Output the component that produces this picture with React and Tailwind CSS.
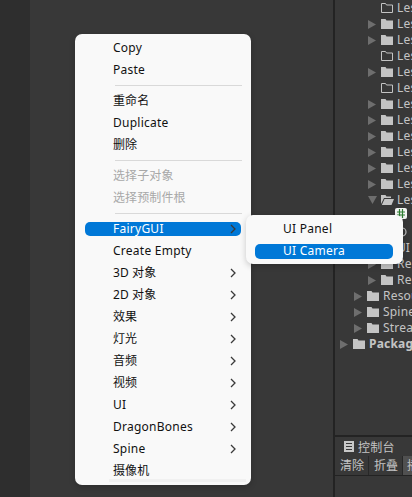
const TF = { fontFamily: '"Noto Sans", "Noto Sans CJK SC", sans-serif' };

function Chevron() {
  return (
    <svg width="6" height="10" viewBox="0 0 6 10" fill="none" className="shrink-0">
      <path d="M1 1L5 5L1 9" stroke="#3a3a3a" strokeWidth="1.3" />
    </svg>
  );
}

function Sep() {
  return (
    <div className="h-[9px] flex items-center pl-[40px] pr-[9px]">
      <div className="h-px w-full bg-[#d9d9d9]" />
    </div>
  );
}

function Item({ label, arrow, active, disabled }) {
  const color = active ? "text-white" : disabled ? "text-[#a8a8a8]" : "text-[#111111]";
  const spacing = /[^\x00-\x7f]/.test(label) ? "tracking-[0.1px]" : "tracking-[0.25px]";
  return (
    <div className="h-[22px] flex items-center relative px-[10px]">
      {active && <div className="absolute left-[10px] right-[10px] top-[4px] h-[14px] rounded-[5px] bg-[#0078d7]" />}
      <span className={`relative ml-[28px] flex-1 text-[12px] leading-[22px] whitespace-nowrap ${spacing} ${color}`}>{label}</span>
      {arrow && <span className="relative flex mr-[5px]"><Chevron /></span>}
    </div>
  );
}

function Arrow({ open }) {
  return open ? (
    <svg width="9" height="8" viewBox="0 0 9 8"><path d="M0 0H9L4.5 8Z" fill="#6e6e6e" /></svg>
  ) : (
    <svg width="8" height="9" viewBox="0 0 8 9"><path d="M0 0L8 4.5L0 9Z" fill="#6e6e6e" /></svg>
  );
}

function Folder({ kind }) {
  if (kind === "empty")
    return (
      <svg width="12" height="10" viewBox="0 0 12 10" fill="none">
        <path d="M.5.5H4.5L5.5 2H11.5V9.5H.5Z" stroke="#c4c4c4" />
      </svg>
    );
  if (kind === "open")
    return (
      <svg width="13" height="10" viewBox="0 0 13 10">
        <path d="M0 0H4.5L5.5 1.5H10V3H3L0 9Z" fill="#c4c4c4" />
        <path d="M3.5 4H13L10.5 10H.8Z" fill="#c4c4c4" />
      </svg>
    );
  return (
    <svg width="12" height="10" viewBox="0 0 12 10">
      <path d="M0 0H4.5L5.5 1.5H12V10H0Z" fill="#c4c4c4" />
    </svg>
  );
}

function Row({ indent, arrow, kind = "full", label, bold }) {
  return (
    <div className="h-4 flex items-center whitespace-nowrap" style={{ paddingLeft: indent }}>
      <span className="w-[13px] shrink-0 flex items-center">{arrow && <Arrow open={kind === "open"} />}</span>
      <span className="w-4 shrink-0 flex items-center"><Folder kind={kind} /></span>
      <span className={`text-[12px] leading-4 text-[#c4c4c4] tracking-[0.2px] ${bold ? "font-bold" : ""}`}>{label}</span>
    </div>
  );
}

const rows = [
  { arrow: false, kind: "empty", label: "Lesson01" },
  { arrow: true, label: "Lesson02" },
  { arrow: true, label: "Lesson03" },
  { arrow: false, kind: "empty", label: "Lesson04" },
  { arrow: true, label: "Lesson05" },
  { arrow: false, kind: "empty", label: "Lesson06" },
  { arrow: true, label: "Lesson07" },
  { arrow: true, label: "Lesson08" },
  { arrow: true, label: "Lesson09" },
  { arrow: true, label: "Lesson10" },
  { arrow: true, label: "Lesson11" },
  { arrow: true, label: "Lesson12" },
  { arrow: true, kind: "open", label: "Lesson13" },
];

export default function App() {
  return (
    <div className="relative w-[412px] h-[497px] overflow-hidden flex bg-[#383838]" style={TF}>
      <div className="w-[30px] shrink-0 bg-[#2e2e2e]" />
      <div className="w-[303px] shrink-0" />
      <div className="w-[2px] shrink-0 bg-[#232323]" />
      <div className="flex-1 min-w-0 flex flex-col overflow-hidden">
        <div className="h-[435px] shrink-0 overflow-hidden">
          {rows.map((r) => (
            <Row key={r.label} indent={33} {...r} />
          ))}
          <div className="h-4" />
          <div className="h-4 flex items-center pl-[62px]">
            <svg width="10" height="10" viewBox="0 0 10 10" fill="none">
              <circle cx="5" cy="5" r="4" stroke="#c4c4c4" strokeWidth="1.2" />
            </svg>
          </div>
          <div className="h-4 flex items-center pl-[62px] text-[12px] text-[#c4c4c4] whitespace-nowrap">UI</div>
          <Row indent={33} arrow label="Res" />
          <Row indent={33} arrow label="Res" />
          <Row indent={19} arrow label="Resources" />
          <Row indent={19} arrow label="Spine" />
          <Row indent={19} arrow label="StreamingAssets" />
          <Row indent={5} arrow label="Packages" bold />
        </div>
        <div className="h-[2px] shrink-0 bg-[#232323]" />
        <div className="h-[19px] shrink-0 flex items-center pl-[9px] gap-[4px]">
          <svg width="10" height="11" viewBox="0 0 10 11">
            <path d="M0 0H10V11H0Z" fill="#c8c8c8" />
            <path d="M2 2.5H8M2 5.5H8M2 8.5H8" stroke="#383838" strokeWidth="1" />
          </svg>
          <span className="text-[12px] leading-[19px] pt-[2px] text-[#c4c4c4] tracking-[0.2px] whitespace-nowrap">控制台</span>
        </div>
        <div className="h-[20px] shrink-0 flex border-b border-[#232323] text-[12px] text-[#c4c4c4] whitespace-nowrap">
          <div className="w-[34px] shrink-0 pl-[5px] leading-[19px] border-r border-[#282828]">清除</div>
          <div className="w-[34px] shrink-0 pl-[5px] leading-[19px] border-r border-[#282828]">折叠</div>
          <div className="flex-1 pl-[4px] leading-[19px] bg-[#505050]">播放</div>
        </div>
        <div className="flex-1" />
      </div>

      <div className="absolute left-[75px] top-[34px] w-[176px] h-[451px] rounded-[7px] bg-[#f9f9f9] pt-[3px] shadow-[0_2px_6px_rgba(0,0,0,0.2)]">
        <Item label="Copy" />
        <Item label="Paste" />
        <Sep />
        <Item label="重命名" />
        <Item label="Duplicate" />
        <Item label="删除" />
        <Sep />
        <Item label="选择子对象" disabled />
        <Item label="选择预制件根" disabled />
        <Sep />
        <Item label="FairyGUI" arrow active />
        <Item label="Create Empty" />
        <Item label="3D 对象" arrow />
        <Item label="2D 对象" arrow />
        <Item label="效果" arrow />
        <Item label="灯光" arrow />
        <Item label="音频" arrow />
        <Item label="视频" arrow />
        <Item label="UI" arrow />
        <Item label="DragonBones" arrow />
        <Item label="Spine" arrow />
        <Item label="摄像机" />
        <div className="absolute left-[34px] right-[5px] top-[445px] h-[3px] bg-[#f1f1f1]" />
      </div>

      <div className="absolute left-[395px] top-[208px] w-[12px] h-[11px] rounded-[2px] bg-[#f4f4f4] flex items-center justify-center">
        <svg width="8" height="9" viewBox="0 0 8 9" fill="none">
          <path d="M2.5 0V9M5.5 0V9M0 3H8M0 6H8" stroke="#2e7d32" strokeWidth="1.2" />
        </svg>
      </div>
      <div className="absolute left-[246px] top-[215px] w-[157px] h-[49px] rounded-[7px] bg-[#f9f9f9] shadow-[0_2px_6px_rgba(0,0,0,0.2)]">
        <div className="absolute left-[37px] top-[3px] h-[22px] text-[12px] leading-[22px] tracking-[0.25px] text-[#111111] whitespace-nowrap">UI Panel</div>
        <div className="absolute left-[9px] top-[29px] w-[138px] h-[15px] rounded-[5px] bg-[#0078d7]" />
        <div className="absolute left-[37px] top-[25px] h-[22px] text-[12px] leading-[22px] tracking-[0.25px] text-white whitespace-nowrap">UI Camera</div>
      </div>
    </div>
  );
}
